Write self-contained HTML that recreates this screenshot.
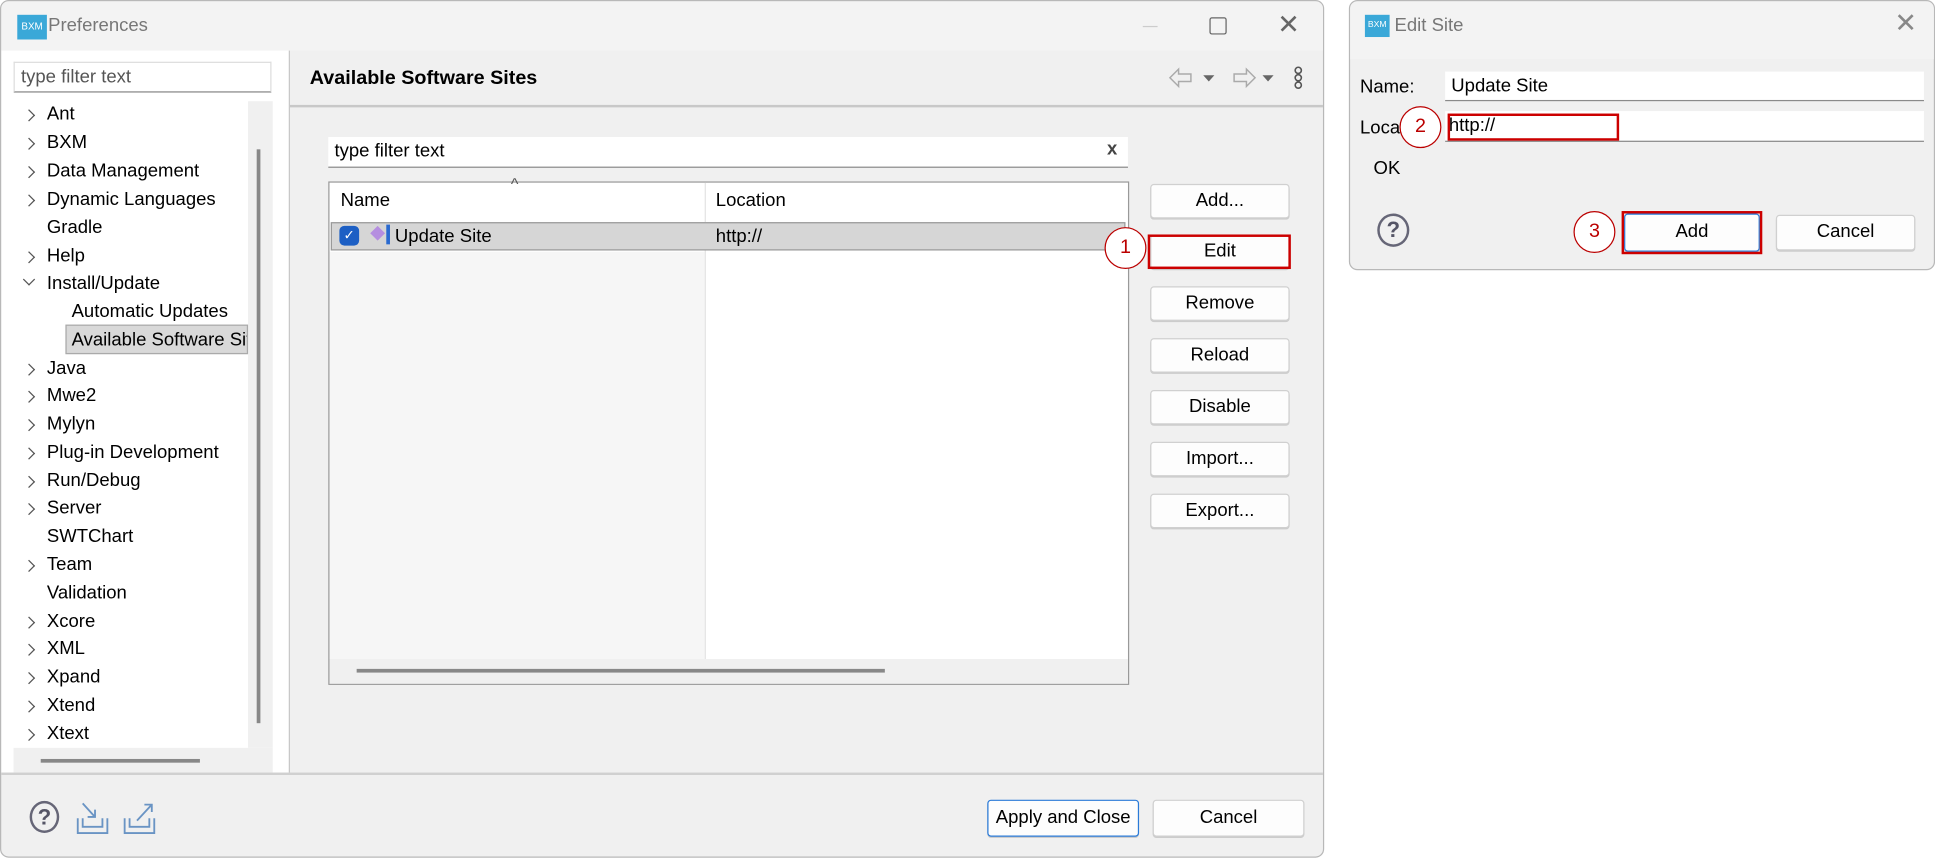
<!DOCTYPE html>
<html><head><meta charset="utf-8"><style>
*{box-sizing:border-box;margin:0;padding:0}
body{width:1935px;height:858px;overflow:hidden;background:#fff;font-family:"Liberation Sans",sans-serif;color:#000}
#w{position:absolute;left:0;top:0;width:1568px;height:695px;transform:scale(1.2341);transform-origin:0 0}
.a{position:absolute}
.t{position:absolute;font-size:15px;white-space:nowrap}
.btn{position:absolute;background:#fdfdfd;border:1px solid #d0d0d0;border-radius:3px;font-size:15px;text-align:center;line-height:26px;box-shadow:0 1px 0 #ccc}
.inp{position:absolute;background:#fff;border-bottom:1px solid #8a8a8a;font-size:15px;padding-left:5px;line-height:24px}
.ch{position:absolute;left:19px;width:7px;height:7px;border-right:1.3px solid #555;border-top:1.3px solid #555;transform:rotate(45deg)}
.circ{position:absolute;width:34px;height:34px;border:1.5px solid #b00;border-radius:50%;background:#fff;font-size:16px;text-align:center;line-height:31px;color:#b00}
.red{position:absolute;border:2px solid #c00}
</style></head><body><div id="w">
<!-- Preferences window -->
<div class="a" style="left:0;top:0;width:1073px;height:695px;background:#f0f0f0;border:1px solid #b8b8b8;border-radius:7px;overflow:hidden">
 <div class="a" style="left:0;top:0;width:1073px;height:40px;background:#f3f3f3"></div>
 <div class="a" style="left:13px;top:11px;width:24px;height:20px;background:#3aa8d8;color:#fff;font-size:8px;line-height:20px;text-align:center">BXM</div>
 <div class="t" style="left:38px;top:11px;color:#777">Preferences</div>
 <div class="a" style="left:925px;top:20px;width:12px;height:1px;background:#ccc"></div>
 <div class="a" style="left:979px;top:13px;width:14px;height:14px;border:1.3px solid #666;border-radius:2px"></div>
 <div class="t" style="left:1034px;top:6px;font-size:22px;color:#666">✕</div>
 <!-- left pane -->
 <div class="a" style="left:0;top:40px;width:233px;height:585px;background:#fff"></div>
 <div class="inp" style="left:10px;top:49px;width:209px;height:25px;color:#555;border:1px solid #ddd;border-bottom:1px solid #888">type filter text</div>
 <div class="a" style="left:200px;top:81px;width:20px;height:524px;background:#f0f0f0"></div>
 <div class="a" style="left:207px;top:120px;width:3px;height:465px;background:#888"></div>
 <div class="a" style="left:10px;top:605px;width:210px;height:20px;background:#f0f0f0"></div>
 <div class="a" style="left:32px;top:614px;width:129px;height:3px;background:#888"></div>
 <div class="a" style="left:233px;top:40px;width:1px;height:585px;background:#c8c8c8"></div>
 <div class="a" style="left:52px;top:262px;width:148px;height:24px;background:#d9d9d9;border:1px solid #aaa"></div>
 <div class="t" style="left:37px;top:83px">Ant</div><i class="ch" style="top:89px"></i>
 <div class="t" style="left:37px;top:106px">BXM</div><i class="ch" style="top:112px"></i>
 <div class="t" style="left:37px;top:129px">Data Management</div><i class="ch" style="top:135px"></i>
 <div class="t" style="left:37px;top:152px">Dynamic Languages</div><i class="ch" style="top:158px"></i>
 <div class="t" style="left:37px;top:175px">Gradle</div>
 <div class="t" style="left:37px;top:198px">Help</div><i class="ch" style="top:204px"></i>
 <div class="t" style="left:37px;top:220px">Install/Update</div><i class="ch" style="top:222px;left:19px;transform:rotate(135deg)"></i>
 <div class="t" style="left:57px;top:243px">Automatic Updates</div>
 <div class="t" style="left:57px;top:266px;width:142px;overflow:hidden">Available Software Sites</div>
 <div class="t" style="left:37px;top:289px">Java</div><i class="ch" style="top:295px"></i>
 <div class="t" style="left:37px;top:311px">Mwe2</div><i class="ch" style="top:317px"></i>
 <div class="t" style="left:37px;top:334px">Mylyn</div><i class="ch" style="top:340px"></i>
 <div class="t" style="left:37px;top:357px">Plug-in Development</div><i class="ch" style="top:363px"></i>
 <div class="t" style="left:37px;top:380px">Run/Debug</div><i class="ch" style="top:386px"></i>
 <div class="t" style="left:37px;top:402px">Server</div><i class="ch" style="top:408px"></i>
 <div class="t" style="left:37px;top:425px">SWTChart</div>
 <div class="t" style="left:37px;top:448px">Team</div><i class="ch" style="top:454px"></i>
 <div class="t" style="left:37px;top:471px">Validation</div>
 <div class="t" style="left:37px;top:494px">Xcore</div><i class="ch" style="top:500px"></i>
 <div class="t" style="left:37px;top:516px">XML</div><i class="ch" style="top:522px"></i>
 <div class="t" style="left:37px;top:539px">Xpand</div><i class="ch" style="top:545px"></i>
 <div class="t" style="left:37px;top:562px">Xtend</div><i class="ch" style="top:568px"></i>
 <div class="t" style="left:37px;top:585px">Xtext</div><i class="ch" style="top:591px"></i>
 <!-- right header -->
 <div class="t" style="left:250px;top:54px;font-weight:bold;font-size:16px">Available Software Sites</div>
 <div class="a" style="left:234px;top:84px;width:839px;height:2px;background:#c8c8c8"></div>
 <svg class="a" style="left:944px;top:52px" width="120" height="22"><path d="M3 10 L10 3 V7 H20 V13 H10 V17 Z" fill="none" stroke="#aaa" stroke-width="1.2"/><path d="M30 8 h9 l-4.5 5z" fill="#666"/><path d="M72 10 L65 3 V7 H55 V13 H65 V17 Z" fill="none" stroke="#aaa" stroke-width="1.2"/><path d="M78 8 h9 l-4.5 5z" fill="#666"/><circle cx="107" cy="4" r="2.5" fill="none" stroke="#555" stroke-width="1.3"/><circle cx="107" cy="10" r="2.5" fill="none" stroke="#555" stroke-width="1.3"/><circle cx="107" cy="16" r="2.5" fill="none" stroke="#555" stroke-width="1.3"/></svg>
 <div class="inp" style="left:265px;top:110px;width:648px;height:25px">type filter text</div>
 <div class="t" style="left:896px;top:111px;font-weight:bold;color:#444">x</div>
 <!-- table -->
 <div class="a" style="left:265px;top:146px;width:649px;height:408px;background:#fff;border:1px solid #999"></div>
 <div class="a" style="left:266px;top:203px;width:304px;height:330px;background:#f6f6f6"></div>
 <div class="a" style="left:570px;top:147px;width:1px;height:386px;background:#e4e4e4"></div>
 <div class="t" style="left:413px;top:140px;font-size:13px;color:#555">^</div>
 <div class="t" style="left:275px;top:153px">Name</div>
 <div class="t" style="left:579px;top:153px">Location</div>
 <div class="a" style="left:267px;top:179px;width:644px;height:23px;background:#d6d6d6;border:1px solid #999"></div>
 <div class="a" style="left:274px;top:182px;width:16px;height:16px;background:#1d5fc4;border-radius:4px;color:#fff;font-size:11px;text-align:center;line-height:16px">✓</div>
 <svg class="a" style="left:298px;top:180px" width="20" height="20"><path d="M7 2 L13 8 L7 14 L1 8Z" fill="#b58ee0"/><rect x="14" y="1" width="3" height="16" fill="#2a6ad0"/></svg>
 <div class="t" style="left:319px;top:182px">Update Site</div>
 <div class="t" style="left:579px;top:182px">http://</div>
 <div class="a" style="left:266px;top:533px;width:647px;height:20px;background:#f0f0f0"></div>
 <div class="a" style="left:288px;top:541px;width:428px;height:3px;background:#888"></div>
 <!-- buttons -->
 <div class="btn" style="left:931px;top:148px;width:113px;height:28px">Add...</div>
 <div class="btn" style="left:931px;top:189px;width:113px;height:28px">Edit</div>
 <div class="red" style="left:929px;top:189px;width:116px;height:28px"></div>
 <div class="btn" style="left:931px;top:231px;width:113px;height:28px">Remove</div>
 <div class="btn" style="left:931px;top:273px;width:113px;height:28px">Reload</div>
 <div class="btn" style="left:931px;top:315px;width:113px;height:28px">Disable</div>
 <div class="btn" style="left:931px;top:357px;width:113px;height:28px">Import...</div>
 <div class="btn" style="left:931px;top:399px;width:113px;height:28px">Export...</div>
 <div class="circ" style="left:894px;top:183px">1</div>
 <!-- bottom -->
 <div class="a" style="left:0;top:625px;width:1073px;height:2px;background:#d0d0d0"></div>
 <div class="a" style="left:23px;top:648px;width:24px;height:26px;border:2px solid #667;border-radius:50%;text-align:center;font-size:18px;line-height:22px;color:#556;font-weight:bold">?</div>
 <svg class="a" style="left:60px;top:647px" width="70" height="30"><path d="M2 15 V27 H26 V15 M6 15 V22 H22 V15" fill="none" stroke="#6a94c4" stroke-width="1.5"/><path d="M6 3 L16 14 M16 8 V14 H10" fill="none" stroke="#6a94c4" stroke-width="1.5"/><path d="M40 15 V27 H64 V15 M44 15 V22 H60 V15" fill="none" stroke="#6a94c4" stroke-width="1.5"/><path d="M50 17 L62 4 M56 4 H62 V10" fill="none" stroke="#6a94c4" stroke-width="1.5"/></svg>
 <div class="btn" style="left:799px;top:647px;width:123px;height:30px;border:1.5px solid #2a7ad8;line-height:27px">Apply and Close</div>
 <div class="btn" style="left:933px;top:647px;width:123px;height:30px;line-height:27px">Cancel</div>
</div>
<!-- Edit Site dialog -->
<div class="a" style="left:1093px;top:0;width:475px;height:219px;background:#f0f0f0;border:1px solid #b8b8b8;border-radius:7px;overflow:hidden">
 <div class="a" style="left:0;top:0;width:475px;height:47px;background:#f3f3f3"></div>
 <div class="a" style="left:12px;top:11px;width:20px;height:18px;background:#3aa8d8;color:#fff;font-size:7px;line-height:18px;text-align:center">BXM</div>
 <div class="t" style="left:36px;top:11px;color:#777">Edit Site</div>
 <div class="t" style="left:441px;top:5px;font-size:22px;color:#888">✕</div>
 <div class="t" style="left:8px;top:61px">Name:</div>
 <div class="inp" style="left:77px;top:57px;width:388px;height:24px">Update Site</div>
 <div class="t" style="left:8px;top:94px">Location:</div>
 <div class="inp" style="left:77px;top:89px;width:388px;height:25px;padding-left:3px">http://</div>
 <div class="red" style="left:79px;top:91px;width:139px;height:22px"></div>
 <div class="circ" style="left:40px;top:85px">2</div>
 <div class="t" style="left:19px;top:127px">OK</div>
 <div class="a" style="left:22px;top:172px;width:26px;height:27px;border:2px solid #667;border-radius:50%;text-align:center;font-size:18px;line-height:23px;color:#556;font-weight:bold">?</div>
 <div class="btn" style="left:222px;top:172px;width:110px;height:31px;border:1.5px solid #2a7ad8;line-height:28px">Add</div>
 <div class="red" style="left:220px;top:170px;width:114px;height:35px"></div>
 <div class="circ" style="left:181px;top:170px">3</div>
 <div class="btn" style="left:345px;top:173px;width:113px;height:29px">Cancel</div>
</div>
</div></body></html>
